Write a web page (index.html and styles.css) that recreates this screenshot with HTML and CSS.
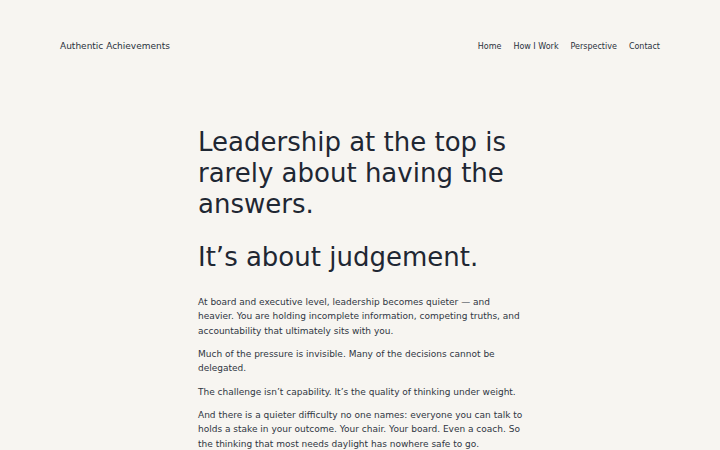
FILE: index.html
```html
<!DOCTYPE html>
<html lang="en">
<head>
<meta charset="utf-8">
<title>Authentic Achievements</title>
<link rel="stylesheet" href="styles.css">
</head>
<body>
<header class="site-header">
  <a class="brand" href="#">Authentic Achievements</a>
  <nav class="nav">
    <a href="#">Home</a>
    <a href="#">How I Work</a>
    <a href="#">Perspective</a>
    <a href="#">Contact</a>
  </nav>
</header>
<main class="content">
  <h1 class="title">Leadership at the top is rarely about having the answers.</h1>
  <h2 class="title sub">It’s about judgement.</h2>
  <p>At board and executive level, leadership becomes quieter — and heavier. You are holding incomplete information, competing truths, and accountability that ultimately sits with you.</p>
  <p>Much of the pressure is invisible. Many of the decisions cannot be delegated.</p>
  <p>The challenge isn’t capability. It’s the quality of thinking under weight.</p>
  <p>And there is a quieter difficulty no one names: everyone you can talk to holds a stake in your outcome. Your chair. Your board. Even a coach. So the thinking that most needs daylight has nowhere safe to go.</p>
</main>
</body>
</html>
```
FILE: styles.css
```css
html, body {
  margin: 0;
  padding: 0;
  background: #f7f5f1;
}
body {
  font-family: "DejaVu Sans", sans-serif;
  color: #1f2733;
}
a {
  color: inherit;
  text-decoration: none;
}
.site-header {
  display: flex;
  justify-content: space-between;
  align-items: center;
  padding: 39px 60px 0;
  height: 14px;
}
.brand {
  font-size: 9px;
  color: #2a313c;
}
.nav {
  display: flex;
  gap: 12px;
  font-size: 8px;
  color: #2a313c;
}
.content {
  width: 330px;
  margin: 0 auto;
  padding: 74px 0 0 6px;
}
.title {
  font-size: 26px;
  font-weight: 400;
  line-height: 1.2;
  margin: 0 0 21px;
  color: #1f2733;
}
.title.sub {
  margin-bottom: 22px;
}
.content p {
  font-size: 9px;
  line-height: 1.6;
  margin: 0 0 9px;
  color: #2f3642;
}
```
